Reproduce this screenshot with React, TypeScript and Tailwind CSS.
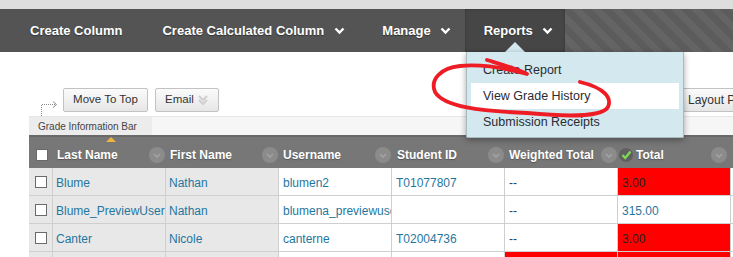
import { FC } from "react";

const Chevron: FC<{ className?: string }> = ({ className }) => (
    <svg width="11" height="8" viewBox="0 0 11 8" className={className}>
        <polyline
            points="1.5,1.5 5.5,5.5 9.5,1.5"
            fill="none"
            stroke="currentColor"
            strokeWidth="2.4"
        />
    </svg>
);

const HeadMenu: FC = () => (
    <span className="w-[16px] h-[16px] rounded-full bg-[#8b8b8b] flex items-center justify-center text-[#a3a3a3]">
        <svg width="10" height="7" viewBox="0 0 10 7">
            <polyline
                points="2,2 5,5 8,2"
                fill="none"
                stroke="currentColor"
                strokeWidth="1.6"
            />
        </svg>
    </span>
);

const Box: FC = () => (
    <span className="w-[12px] h-[12px] bg-white border border-[#6a6a6a] block" />
);

const NavBar: FC = () => {
    return (
        <div className="h-[43px] bg-[#545454] flex text-white font-bold text-[13px] [text-shadow:0_1px_1px_#333]">
            <div className="pl-[30px] pr-[40px] flex items-center">
                Create Column
            </div>
            <div className="pr-[37px] flex items-center gap-[10px]">
                Create Calculated Column
                <Chevron />
            </div>
            <div className="pr-[14px] flex items-center gap-[9px]">
                Manage
                <Chevron />
            </div>
            <div className="w-[100px] pl-[19px] flex items-center gap-[9px] bg-[#464646] shadow-[inset_0_0_3px_#333]">
                Reports
                <Chevron />
            </div>
            <div className="flex-1 bg-[repeating-linear-gradient(45deg,#5c5c5c_0px,#5c5c5c_7px,#646464_7px,#646464_14px)]" />
        </div>
    );
};

const Toolbar: FC = () => {
    return (
        <div className="h-[64px] flex items-start pt-[36px] text-[11px] text-[#333]">
            <svg width="34" height="28" viewBox="0 0 34 28" className="mt-[9px] ml-[29px]">
                <path
                    d="M12.5 27 V7.5 H26"
                    fill="none"
                    stroke="#8a8a8a"
                    strokeWidth="1"
                    strokeDasharray="1 1"
                />
                <polyline
                    points="24,4.5 27.5,7.5 24,10.5"
                    fill="none"
                    stroke="#8a8a8a"
                    strokeWidth="1"
                />
            </svg>
            <button className="h-[24px] w-[85px] border border-[#c2c2c2] rounded-[2px] bg-[linear-gradient(#fbfbfb,#e6e6e6)] text-[11.5px]">
                Move To Top
            </button>
            <button className="ml-[7px] h-[24px] w-[64px] pl-[9px] border border-[#c2c2c2] rounded-[2px] bg-[linear-gradient(#fbfbfb,#e6e6e6)] flex items-center gap-[4px] text-[11.5px]">
                Email
                <svg width="10" height="12" viewBox="0 0 10 12">
                    <polyline points="1,2 5,6 9,2" fill="none" stroke="#cfcfcf" strokeWidth="2" />
                    <polyline points="1,6 5,10 9,6" fill="none" stroke="#cfcfcf" strokeWidth="2" />
                </svg>
            </button>
            <button className="ml-auto h-[24px] pl-[7px] border border-[#c2c2c2] rounded-[2px] bg-[linear-gradient(#fbfbfb,#e6e6e6)] w-[60px] text-left -mr-[7px] text-[12px]">
                Layout P
            </button>
        </div>
    );
};

const InfoBar: FC = () => (
    <div className="h-[19px] ml-[29px] flex bg-[#f6f6f6] border-t border-[#e6e6e6]">
        <div className="w-[123px] bg-[#ececec] text-[10px] text-[#444] pl-[9px] flex items-center">
            Grade Information Bar
        </div>
    </div>
);

interface Row {
    last: string;
    first: string;
    user: string;
    id: string;
    weighted: string;
    weightedRed?: boolean;
    total: string;
    red: boolean;
}

const rows: Row[] = [
    { last: "Blume", first: "Nathan", user: "blumen2", id: "T01077807", weighted: "--", total: "3.00", red: true },
    { last: "Blume_PreviewUser", first: "Nathan", user: "blumena_previewuser", id: "", weighted: "--", total: "315.00", red: false },
    { last: "Canter", first: "Nicole", user: "canterne", id: "T02004736", weighted: "--", total: "3.00", red: true },
    { last: "", first: "", user: "", id: "", weighted: "", weightedRed: true, total: "", red: true },
];

const cols = "grid grid-cols-[24px_113px_113px_113px_113px_113px_113px_113px]";

const GradeTable: FC = () => {
    return (
        <div className="ml-[29px] w-[820px]">
            <div className={`${cols} h-[33px] pt-[5px] bg-[#777777] border-t-2 border-[#696969] relative text-white font-bold text-[12px] [text-shadow:0_1px_1px_#555]`}>
                <span className="absolute left-[77px] top-0 w-0 h-0 border-l-[5px] border-r-[5px] border-b-[5px] border-transparent border-b-[#f0b43c]" />
                <div className="flex items-center justify-center pl-[1px]">
                    <Box />
                </div>
                <div className="flex items-center justify-between pl-[4px] pr-[1px]">
                    Last Name
                    <HeadMenu />
                </div>
                <div className="flex items-center justify-between pl-[4px] pr-[1px]">
                    First Name
                    <HeadMenu />
                </div>
                <div className="flex items-center justify-between pl-[4px] pr-[1px]">
                    Username
                    <HeadMenu />
                </div>
                <div className="flex items-center justify-between pl-[5px] pr-[1px]">
                    Student ID
                    <HeadMenu />
                </div>
                <div className="flex items-center justify-between pl-[4px] pr-[1px]">
                    Weighted Total
                    <HeadMenu />
                </div>
                <div className="flex items-center justify-between pl-[1px] pr-[4px]">
                    <span className="flex items-center gap-[3px]">
                        <span className="w-[14px] h-[14px] rounded-full bg-[#5f5f5f] flex items-center justify-center">
                            <svg width="11" height="10" viewBox="0 0 11 10">
                                <polyline points="1.5,5 4.2,8 9.5,1.5" fill="none" stroke="#7ed957" strokeWidth="2.2" />
                            </svg>
                        </span>
                        Total
                    </span>
                    <HeadMenu />
                </div>
                <div />
            </div>
            {rows.map((r, i) => (
                <div key={i} className={`${cols} h-[28px] pt-[2px] text-[12px] text-[#1f77a0] border-b border-[#cfcfcf]`}>
                    <div className="bg-[#e8e8e8] -mt-[2px] flex items-center justify-center border-r border-[#cfcfcf]">
                        {i < 3 && <Box />}
                    </div>
                    <div className="bg-[#e8e8e8] -mt-[2px] pt-[2px] flex items-center pl-[3px] border-r border-[#cfcfcf] overflow-hidden whitespace-nowrap">
                        {r.last}
                    </div>
                    <div className="bg-[#e8e8e8] -mt-[2px] pt-[2px] flex items-center pl-[3px] border-r border-[#cfcfcf] overflow-hidden whitespace-nowrap">
                        {r.first}
                    </div>
                    <div className="bg-white -mt-[2px] pt-[2px] flex items-center pl-[4px] border-r border-[#cfcfcf] overflow-hidden whitespace-nowrap">
                        {r.user}
                    </div>
                    <div className="bg-white -mt-[2px] pt-[2px] flex items-center pl-[4px] border-r border-[#cfcfcf] overflow-hidden whitespace-nowrap">
                        {r.id}
                    </div>
                    <div className={`${r.weightedRed ? "bg-[#ff0000]" : "bg-white"} -mt-[2px] pt-[2px] flex items-center pl-[4px] border-r border-[#cfcfcf] text-[#1c3f6e]`}>
                        {r.weighted}
                    </div>
                    <div className={`${r.red ? "bg-[#ff0000] text-[#222]" : "bg-white"} -mt-[2px] pt-[2px] flex items-center pl-[4px] border-r border-[#cfcfcf]`}>
                        {r.total}
                    </div>
                    <div className="bg-white -mt-[2px]" />
                </div>
            ))}
        </div>
    );
};

const ReportsMenu: FC = () => (
    <>
        <span className="absolute left-[505px] top-[42px] w-0 h-0 border-l-[10px] border-r-[10px] border-b-[10px] border-transparent border-b-[#d3e9ef]" />
        <div className="absolute left-[466px] top-[52px] w-[218px] h-[86px] bg-[#d3e9ef] border border-[#a9b9be] border-t-0 rounded-b-[2px] shadow-[0_2px_6px_rgba(0,0,0,0.35)] pt-[5px] px-[4px] text-[12.5px] text-[#2b2b33]">
            <div className="h-[26px] pl-[12px] flex items-center">Create Report</div>
            <div className="h-[26px] pl-[12px] flex items-center bg-white">View Grade History</div>
            <div className="h-[26px] pl-[12px] flex items-center">Submission Receipts</div>
        </div>
    </>
);

const Scribble: FC = () => (
    <svg width="733" height="257" className="absolute left-0 top-0 pointer-events-none">
        <path
            d="M487 60 C500 64 515 68 527 74 C505 68 480 64 460 66 C440 68 430 80 435 92 C444 107 480 111 527 113 C572 117 602 117 608 107 C612 98 605 88 580 82"
            fill="none"
            stroke="#ee1c24"
            strokeWidth="3.8"
            strokeLinecap="round"
            strokeLinejoin="round"
        />
    </svg>
);

const App: FC = () => {
    return (
        <div className="w-[733px] h-[257px] overflow-hidden relative bg-white font-['Liberation_Sans',Arial,sans-serif]">
            <div className="h-[9px] bg-[#dedede]" />
            <NavBar />
            <Toolbar />
            <InfoBar />
            <GradeTable />
            <ReportsMenu />
            <Scribble />
        </div>
    );
};

export default App;
